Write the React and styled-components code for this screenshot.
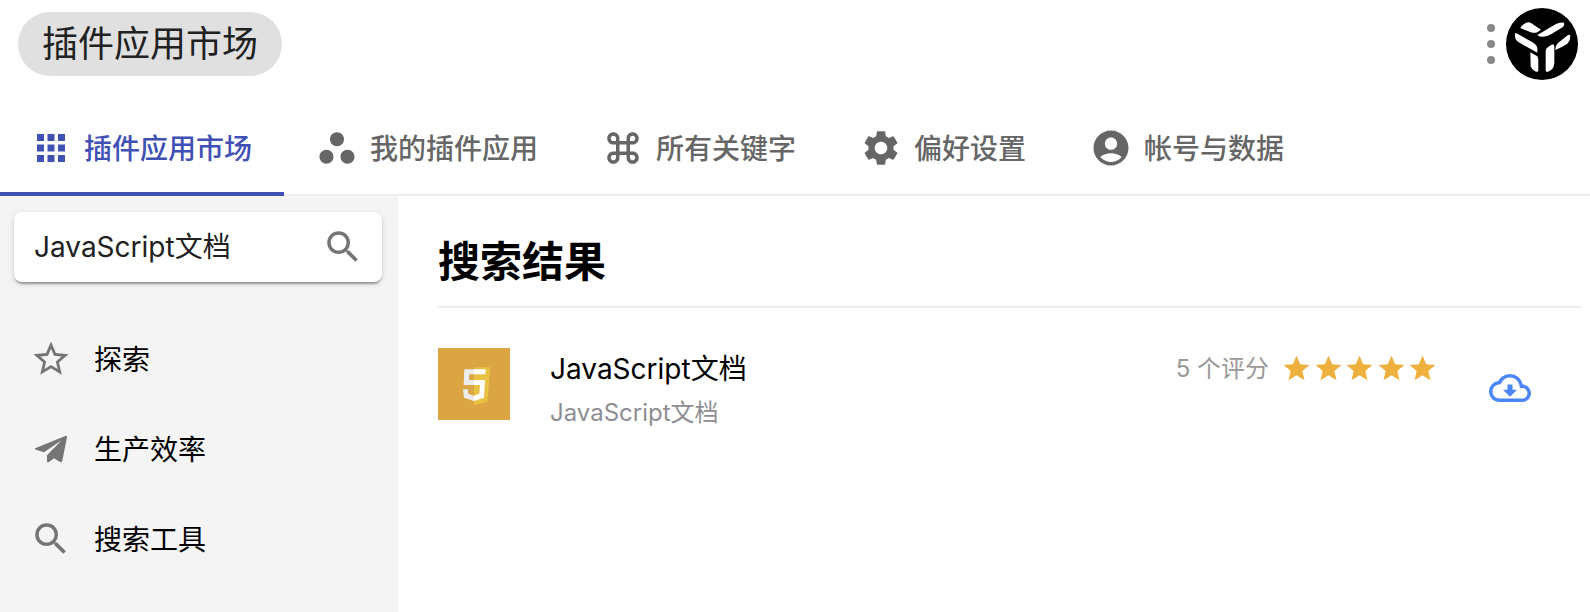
import React from 'react'
import styled, { createGlobalStyle } from 'styled-components';
import {
  MdApps,
  MdWorkspaces,
  MdKeyboardCommandKey,
  MdSettings,
  MdAccountCircle,
  MdSearch,
  MdStar,
  MdStarBorder,
  MdOutlineCloudDownload,
} from 'react-icons/md';

const tabs = [
  { name: '插件应用市场', icon: <MdApps /> },
  { name: '我的插件应用', icon: <MdWorkspaces /> },
  { name: '所有关键字', icon: <MdKeyboardCommandKey /> },
  { name: '偏好设置', icon: <MdSettings /> },
  { name: '帐号与数据', icon: <MdAccountCircle /> },
]

const PlaneIcon = () => (
  <svg viewBox="0 0 126 126" fill="currentColor" aria-hidden="true">
    <path d="M17 60 L106 24 Q112 22 111 28 L97 98 Q95 105 89 101 L72 91 L57 102 Q51 106 51 99 L51 82 L95 37 L42 73 L18 65 Q12 62 17 60 Z" />
  </svg>
)

const categories = [
  { name: '探索', icon: <MdStarBorder /> },
  { name: '生产效率', icon: <PlaneIcon /> },
  { name: '搜索工具', icon: <MdSearch /> },
]

const App = () => {
  return (
    <Page>
      <GlobalStyle />
      <Header>
        <Chip>插件应用市场</Chip>
        <HeaderRight>
          <MenuButton aria-label="菜单">
            <svg width="8" height="40" viewBox="0 0 8 40" fill="currentColor">
              <circle cx="4" cy="4" r="4" />
              <circle cx="4" cy="20" r="4" />
              <circle cx="4" cy="36" r="4" />
            </svg>
          </MenuButton>
          <Avatar aria-label="账号">
            <svg width="72" height="72" viewBox="0 0 216 216">
              <circle cx="108" cy="108" r="108" fill="#000" />
              <g fill="#fff">
                <path d="M43 60 Q45 54 54 48 Q66 40 75 45 L105 65 L94 73 Q86 76 74 73 Z" />
                <path d="M94 81 L150 48 Q161 42 174 44 Q177 49 171 57 L135 79 Q124 87 107 86 Q98 86 94 81 Z" />
                <path d="M27 76 Q31 75 37 79 L82 104 Q94 112 94 122 L94 134 L38 103 Q27 96 27 84 Z" />
                <path d="M148 125 Q148 112 156 105 L185 82 Q191 78 193 84 Q193 97 186 105 Q181 111 148 126 Z" />
                <path d="M73 133 L94 145 Q97 150 97 158 L97 188 Q97 192 90 191 Q80 188 74 175 Z" />
                <path d="M119 129 Q119 121 127 116 Q135 110 143 109 L145 116 L145 165 Q144 178 138 184 Q131 191 123 192 Q119 192 119 187 Z" />
              </g>
            </svg>
          </Avatar>
        </HeaderRight>
      </Header>

      <Tabs>
        {tabs.map((tab, i) => (
          <Tab key={tab.name} $active={i === 0}>
            {tab.icon}
            <Label>{tab.name}</Label>
          </Tab>
        ))}
      </Tabs>

      <Body>
        <Sidebar>
          <SearchBox>
            <SearchInput aria-label="搜索插件应用" defaultValue="JavaScript文档" />
            <SearchButton aria-label="搜索"><MdSearch /></SearchButton>
          </SearchBox>
          <Categories>
            {categories.map((item) => (
              <Category key={item.name}>
                {item.icon}
                <Label>{item.name}</Label>
              </Category>
            ))}
          </Categories>
        </Sidebar>

        <Main>
          <Title>搜索结果</Title>
          <Plugin>
            <Logo viewBox="0 0 216 216" aria-hidden="true">
              <rect width="216" height="216" fill="#dba544" />
              <path d="M108 58 H157 L148 161 L108 172 Z" fill="#e7c244" />
              <path d="M79 64 H108 V79 H94 L93 96 H108 V111 H77 Z M75 124 H90 L91 137 L108 143 V159 L78 149 Z" fill="#ececec" />
              <path d="M108 64 H143 L142 79 H108 Z M108 96 H141 L138 149 L108 159 V143 L124 137 L126 111 H108 Z" fill="#fff" />
            </Logo>
            <PluginText>
              <PluginName>JavaScript文档</PluginName>
              <PluginInfo>JavaScript文档</PluginInfo>
            </PluginText>
            <Rating>
              <Label>5 个评分</Label>
              <Stars>
                {[1, 2, 3, 4, 5].map((n) => <MdStar key={n} />)}
              </Stars>
            </Rating>
            <Download aria-label="下载"><MdOutlineCloudDownload /></Download>
          </Plugin>
        </Main>
      </Body>
    </Page>
  )
}

const GlobalStyle = createGlobalStyle`
*{
  box-sizing:border-box;
}
body{
  margin:0;
  background-color:#fff;
}
body, button, input{
  font-family:Inter, "Noto Sans CJK SC", sans-serif;
}
button{
  border:0;
  padding:0;
  background:none;
  cursor:pointer;
}
`

const Page = styled.div`
min-height:100vh;
display:flex;
flex-direction:column;
color:#000;
`

const Header = styled.header`
display:flex;
justify-content:space-between;
align-items:center;
padding:8px 12px 8px 18px;
margin-bottom:12px;
`

const Chip = styled.div`
padding:0 24px;
border-radius:32px;
background-color:#e0e0e0;
color:#212121;
font-size:36px;
line-height:64px;
`

const HeaderRight = styled.div`
display:flex;
align-items:center;
gap:11px;
`

const MenuButton = styled.button`
display:flex;
color:#888;
`

const Avatar = styled.button`
display:flex;
border-radius:50%;
`

const Label = styled.span`
padding-bottom:3px;
`

const Tabs = styled.nav`
display:flex;
height:96px;
padding-right:32px;
box-shadow:inset 0 -2px #eee;
`

const Tab = styled.button`
display:flex;
align-items:center;
gap:12px;
padding:0 32px;
font-size:28px;
font-weight:500;
white-space:nowrap;
color:${(props) => (props.$active ? '#3f51b5' : '#666')};
box-shadow:${(props) => (props.$active ? 'inset 0 -4px #3f51b5' : 'none')};
&:first-child{
  padding-left:30px;
}
svg{
  width:42px;
  height:42px;
}
`

const Body = styled.div`
flex:1;
display:flex;
`

const Sidebar = styled.aside`
flex:0 0 398px;
min-width:0;
padding:16px 16px 0 14px;
background-color:#f4f4f4;
`

const SearchBox = styled.div`
display:flex;
align-items:center;
height:70px;
padding:0 18px 0 20px;
border-radius:8px;
background-color:#fff;
box-shadow:0 4px 2px -2px rgba(0,0,0,0.2), 0 2px 2px rgba(0,0,0,0.14), 0 2px 6px rgba(0,0,0,0.12);
`

const SearchInput = styled.input`
flex:1;
min-width:0;
padding:0 0 4px;
border:0;
outline:none;
background:none;
color:#212121;
font-size:28px;
`

const SearchButton = styled.button`
display:flex;
color:#757575;
svg{
  width:42px;
  height:42px;
}
`

const Categories = styled.nav`
display:flex;
flex-direction:column;
margin-top:32px;
`

const Category = styled.button`
display:flex;
align-items:center;
gap:22px;
height:90px;
padding:0 16px;
font-size:28px;
color:#000;
svg{
  width:42px;
  height:42px;
  color:#757575;
}
`

const Main = styled.main`
flex:1;
min-width:0;
padding:0 8px 0 40px;
`

const Title = styled.h1`
margin:0;
padding:36px 0 14px;
border-bottom:2px solid #eee;
font-size:42px;
font-weight:700;
line-height:60px;
`

const Plugin = styled.article`
display:flex;
align-items:flex-start;
padding:40px 27px 40px 0;
`

const Logo = styled.svg`
width:72px;
height:72px;
`

const PluginText = styled.div`
flex:1;
margin-left:40px;
`

const PluginName = styled.div`
font-size:28px;
line-height:42px;
`

const PluginInfo = styled.div`
margin-top:8px;
font-size:24px;
line-height:30px;
color:#8e8e93;
`

const Rating = styled.div`
display:flex;
align-items:center;
gap:12px;
height:40px;
font-size:24px;
color:#999;
`

const Stars = styled.div`
display:grid;
grid-template-columns:repeat(5, 1fr);
width:158px;
color:#efb03d;
svg{
  width:31px;
  height:31px;
}
`

const Download = styled.button`
display:flex;
align-self:center;
margin-left:26px;
padding:0 24px;
color:#4a86f7;
svg{
  width:42px;
  height:42px;
}
`

export default App
